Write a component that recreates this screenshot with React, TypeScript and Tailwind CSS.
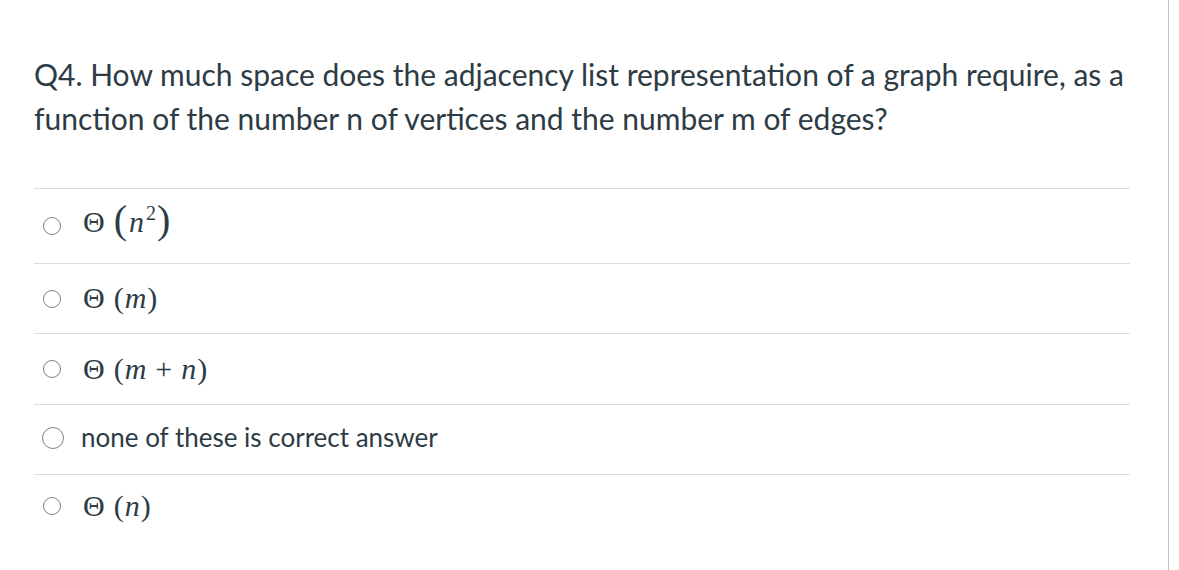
import React from "react";

const mathFont = { fontFamily: '"Liberation Serif", "DejaVu Serif", serif' };

function Radio({ big }: { big?: boolean }) {
  return (
    <span
      className={`inline-block shrink-0 rounded-full border-[1.5px] border-[#808080] bg-white ${
        big ? "w-[22px] h-[22px]" : "w-[18px] h-[18px]"
      }`}
    />
  );
}

function Theta() {
  return <span className="not-italic">Θ</span>;
}

const options: { key: string; math: React.ReactNode | null; text?: string; h: string }[] = [
  {
    key: "n2",
    h: "h-[75px]",
    math: (
      <span className="flex items-center text-[30px] text-[#2d3b45] -mt-[10px]" style={mathFont}>
        <Theta />
        <span className="ml-[9px] text-[40px] leading-none -mt-[2px]">(</span>
        <span className="italic ml-[2px]">n</span>
        <span className="text-[20px] -mt-[16px] ml-[2px]">2</span>
        <span className="text-[40px] leading-none -mt-[2px] ml-[1px]">)</span>
      </span>
    ),
  },
  {
    key: "m",
    h: "h-[70px]",
    math: (
      <span className="flex items-center text-[30px] text-[#2d3b45] -mt-[2px]" style={mathFont}>
        <Theta />
        <span className="ml-[9px]">(</span>
        <span className="italic ml-[1px]">m</span>
        <span className="ml-[1px]">)</span>
      </span>
    ),
  },
  {
    key: "mn",
    h: "h-[71px]",
    math: (
      <span className="flex items-center text-[30px] text-[#2d3b45] -mt-[2px]" style={mathFont}>
        <Theta />
        <span className="ml-[9px]">(</span>
        <span className="italic ml-[1px]">m</span>
        <span className="mx-[9px]">+</span>
        <span className="italic">n</span>
        <span className="ml-[1px]">)</span>
      </span>
    ),
  },
  { key: "none", h: "h-[70px]", math: null, text: "none of these is correct answer" },
  {
    key: "n",
    h: "h-[62px]",
    math: (
      <span className="flex items-center text-[30px] text-[#2d3b45] -mt-[2px]" style={mathFont}>
        <Theta />
        <span className="ml-[9px]">(</span>
        <span className="italic ml-[1px]">n</span>
        <span className="ml-[1px]">)</span>
      </span>
    ),
  },
];

export default function App() {
  return (
    <div className="w-[1179px] h-[570px] bg-white overflow-hidden flex">
      <div className="w-[1169px] border-r border-[#c4c4c4] pl-[34px] pr-[38px] pt-[52px]">
        <p
          className="text-[30px] leading-[44px] text-[#2d3b45]"
          style={{ fontFamily: "Lato, sans-serif" }}
        >
          Q4. How much space does the adjacency list representation of a graph require, as a function of
          the number n of vertices and the number m of edges?
        </p>

        <div className="mt-[48px] border-t border-[#dcdcdc]">
          {options.map((o, i) => (
            <div
              key={o.key}
              className={`${o.h} flex items-center ${
                i < options.length - 1 ? "border-b border-[#dcdcdc]" : ""
              }`}
            >
              {o.math ? (
                <div className="flex items-center pl-[9px] gap-[22px]">
                  <Radio />
                  {o.math}
                </div>
              ) : (
                <div className="flex items-center pl-[8px] gap-[17px] -mt-[4px]">
                  <Radio big />
                  <span
                    className="text-[26px] text-[#2d3b45]"
                    style={{ fontFamily: "Lato, sans-serif" }}
                  >
                    {o.text}
                  </span>
                </div>
              )}
            </div>
          ))}
        </div>
      </div>
    </div>
  );
}
